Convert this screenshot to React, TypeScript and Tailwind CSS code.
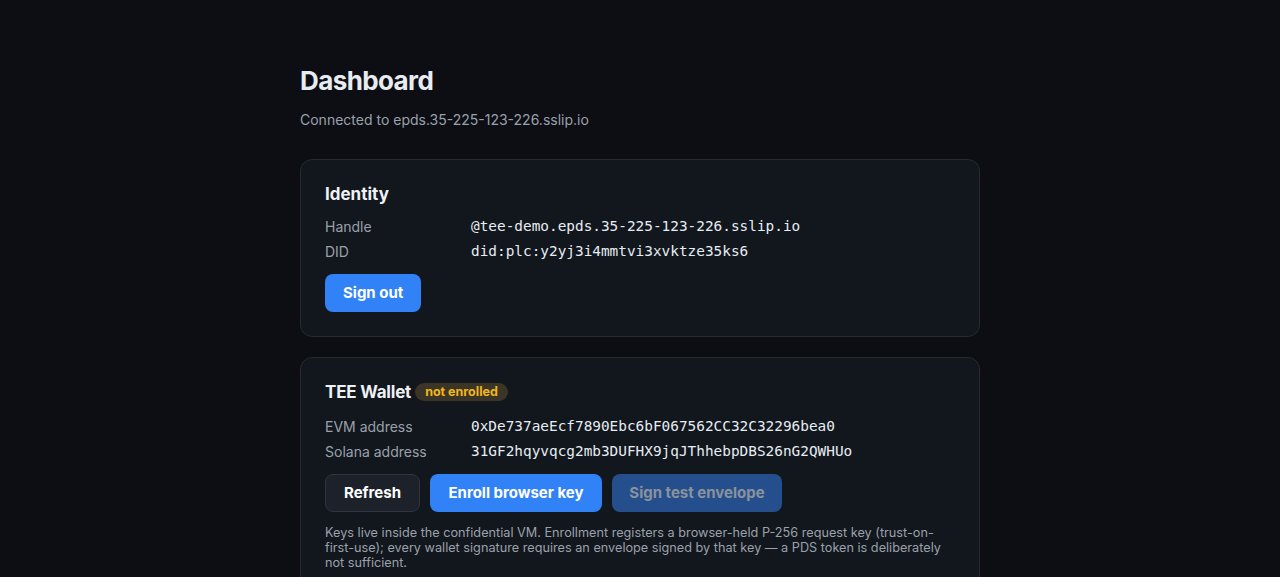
export default function App() {
  const sans = "font-['Inter','Noto_Sans',sans-serif]";
  const mono = "font-['DejaVu_Sans_Mono','Liberation_Mono',monospace] text-[14.4px] text-[#e6edf3]";

  return (
    <div className={`min-h-screen bg-[#0c0e13] ${sans} text-[#e6edf3]`}>
      <div className="mx-auto w-[680px] pt-[64px] pb-10">
        <h1 className="text-[26px] font-bold leading-[34px] tracking-[-0.6px] text-[#e8ecf1]">Dashboard</h1>
        <p className="mt-[12px] text-[14px] leading-[20px] text-[#9aa1ab]">Connected to epds.35-225-123-226.sslip.io</p>

        {/* Identity */}
        <section className="mt-[29px] rounded-[12px] border border-[#252a33] bg-[#12161d] p-6">
          <h2 className="text-[17px] font-bold leading-[20px] text-[#eef1f5]">Identity</h2>
          <div className="mt-[10px]">
            <div className="flex h-[25px] items-center">
              <span className="w-[146px] text-[14px] text-[#9aa1ab]">Handle</span>
              <span className={mono}>@tee-demo.epds.35-225-123-226.sslip.io</span>
            </div>
            <div className="flex h-[25px] items-center">
              <span className="w-[146px] text-[14px] text-[#9aa1ab]">DID</span>
              <span className={mono}>did:plc:y2yj3i4mmtvi3xvktze35ks6</span>
            </div>
          </div>
          <div className="mt-[10px] flex">
            <button className="h-[38px] rounded-[8px] bg-[#3182f6] px-[18px] text-[15px] font-bold text-white">Sign out</button>
          </div>
        </section>

        {/* TEE Wallet */}
        <section className="mt-[20px] rounded-[12px] border border-[#252a33] bg-[#12161d] p-6">
          <div className="flex h-[20px] items-center gap-[4px]">
            <h2 className="text-[17px] font-bold leading-[20px] tracking-[-0.2px] text-[#eef1f5]">TEE Wallet</h2>
            <span className="rounded-full bg-[#3a3527] px-[10px] text-[12.5px] font-bold leading-[18px] text-[#f2b61d]">not enrolled</span>
          </div>
          <div className="mt-[12px]">
            <div className="flex h-[25px] items-center">
              <span className="w-[146px] text-[14px] text-[#9aa1ab]">EVM address</span>
              <span className={mono}>0xDe737aeEcf7890Ebc6bF067562CC32C32296bea0</span>
            </div>
            <div className="flex h-[25px] items-center">
              <span className="w-[146px] text-[14px] text-[#9aa1ab]">Solana address</span>
              <span className={mono}>31GF2hqyvqcg2mb3DUFHX9jqJThhebpDBS26nG2QWHUo</span>
            </div>
          </div>
          <div className="mt-[10px] flex gap-[10px]">
            <button className="h-[38px] w-[95px] rounded-[8px] border border-[#2f353e] bg-[#1d222a] text-[15px] font-bold text-white">Refresh</button>
            <button className="h-[38px] w-[172px] rounded-[8px] bg-[#3182f6] text-[15px] font-bold text-white">Enroll browser key</button>
            <button disabled className="h-[38px] w-[170px] rounded-[8px] bg-[#244f8c] text-[15px] font-bold text-[#8a929c]">Sign test envelope</button>
          </div>
          <p className="mt-[13px] text-[12.7px] leading-[15px] text-[#9aa1ab]">
            Keys live inside the confidential VM. Enrollment registers a browser-held P-256 request key (trust-on-first-use); every wallet signature requires an envelope signed by that key — a PDS token is deliberately not sufficient.
          </p>
        </section>
      </div>
    </div>
  );
}
